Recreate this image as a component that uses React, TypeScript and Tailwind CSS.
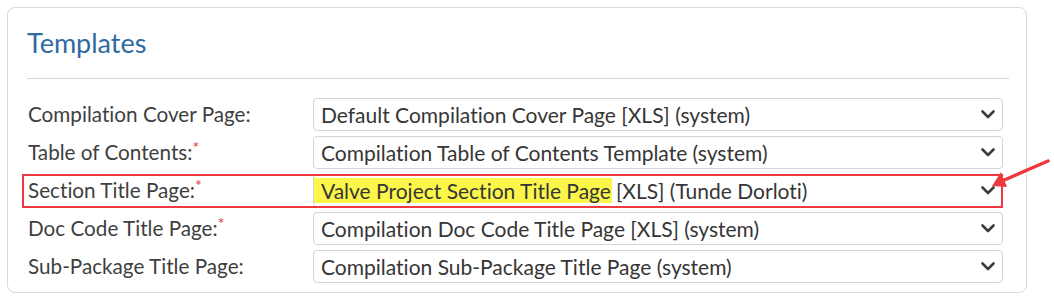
import React from 'react';

const Chevron: React.FC = () => (
	<svg width="14" height="9" viewBox="0 0 14 9" className="shrink-0">
		<polyline
			points="1.5,1.5 7,7 12.5,1.5"
			fill="none"
			stroke="#3d3d3d"
			strokeWidth="2.6"
			strokeLinecap="round"
			strokeLinejoin="round"
		/>
	</svg>
);

interface RowProps {
	label: string;
	required?: boolean;
	value: React.ReactNode;
	marked?: boolean;
}

const Row: React.FC<RowProps> = ({ label, required, value, marked }) => {
	return (
		<div
			className={`flex h-[34px] w-full items-start ${
				marked ? 'outline-2 -outline-offset-2 outline-[#ee3a3f]' : ''
			}`}
		>
			<div className="flex h-[33px] w-[291px] shrink-0 items-center pl-[6px] text-[20.7px] text-[#3f3f3f]">
				{label}
				{required && (
					<span className="relative -top-[6px] text-[16px] text-[#d9383d]">*</span>
				)}
			</div>
			<div className="flex h-[33px] flex-1 items-center rounded-[4px] border border-[#d4d4d4] bg-white pr-[7px] text-[21px] text-[#363636]">
				<div className="flex h-full flex-1 items-center overflow-hidden whitespace-nowrap">
					{value}
				</div>
				<Chevron />
			</div>
		</div>
	);
};

export default function App() {
	return (
		<div
			className="relative h-[300px] w-[1054px] bg-white pl-[7px] pt-[7px] [font-variant-ligatures:none]"
			style={{ fontFamily: 'Lato, "Open Sans", sans-serif' }}
		>
			<div className="flex h-[286px] w-[1020px] flex-col rounded-[8px] border border-[#d9d9d9] pl-[14px]">
				<div className="flex h-[70px] items-center pl-[5px] pt-[1px] text-[27px] text-[#2f6aa3]">
					Templates
				</div>
				<div className="ml-[5px] h-px w-[982px] bg-[#d6d6d6]" />
				<div className="mt-[19px] flex w-[981px] flex-col gap-[4px]">
					<Row
						label="Compilation Cover Page:"
						value={<span className="pl-[7px]">Default Compilation Cover Page [XLS] (system)</span>}
					/>
					<Row
						label="Table of Contents:"
						required
						value={<span className="pl-[7px]">Compilation Table of Contents Template (system)</span>}
					/>
					<Row
						label="Section Title Page:"
						required
						marked
						value={
							<>
								<span className="flex h-[25px] items-center bg-[#fcf64a] pl-[7px] pr-[1px]">
									Valve Project Section Title Page
								</span>
								<span className="pl-[4px]">[XLS] (Tunde Dorloti)</span>
							</>
						}
					/>
					<Row
						label="Doc Code Title Page:"
						required
						value={<span className="pl-[7px]">Compilation Doc Code Title Page [XLS] (system)</span>}
					/>
					<Row
						label="Sub-Package Title Page:"
						value={<span className="pl-[7px]">Compilation Sub-Package Title Page (system)</span>}
					/>
				</div>
			</div>
			<svg
				className="pointer-events-none absolute left-0 top-0"
				width="1054"
				height="300"
				viewBox="0 0 1054 300"
			>
				<line x1="1048" y1="161" x2="1002" y2="181" stroke="#ee3a3f" strokeWidth="3.5" strokeLinecap="round" />
				<polygon points="992,186 1001,172 1007,187" fill="#ee3a3f" />
			</svg>
		</div>
	);
}
